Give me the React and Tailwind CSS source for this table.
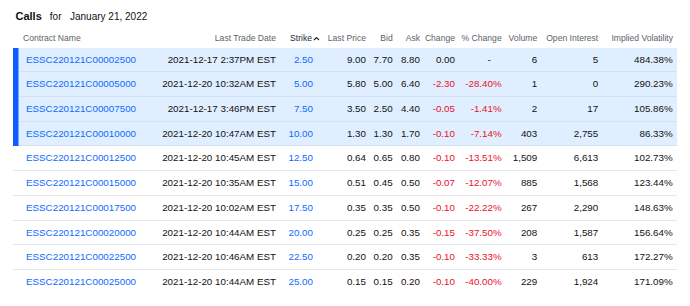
import React from "react";

const rows = [
  ["ESSC220121C00002500", "2021-12-17 2:37PM EST", "2.50", "9.00", "7.70", "8.80", "0.00", "-", "6", "5", "484.38%", true],
  ["ESSC220121C00005000", "2021-12-20 10:32AM EST", "5.00", "5.80", "5.00", "6.40", "-2.30", "-28.40%", "1", "0", "290.23%", true],
  ["ESSC220121C00007500", "2021-12-17 3:46PM EST", "7.50", "3.50", "2.50", "4.40", "-0.05", "-1.41%", "2", "17", "105.86%", true],
  ["ESSC220121C00010000", "2021-12-20 10:47AM EST", "10.00", "1.30", "1.30", "1.70", "-0.10", "-7.14%", "403", "2,755", "86.33%", true],
  ["ESSC220121C00012500", "2021-12-20 10:45AM EST", "12.50", "0.64", "0.65", "0.80", "-0.10", "-13.51%", "1,509", "6,613", "102.73%", false],
  ["ESSC220121C00015000", "2021-12-20 10:35AM EST", "15.00", "0.51", "0.45", "0.50", "-0.07", "-12.07%", "885", "1,568", "123.44%", false],
  ["ESSC220121C00017500", "2021-12-20 10:02AM EST", "17.50", "0.35", "0.35", "0.50", "-0.10", "-22.22%", "267", "2,290", "148.63%", false],
  ["ESSC220121C00020000", "2021-12-20 10:44AM EST", "20.00", "0.25", "0.25", "0.35", "-0.15", "-37.50%", "208", "1,587", "156.64%", false],
  ["ESSC220121C00022500", "2021-12-20 10:46AM EST", "22.50", "0.20", "0.20", "0.35", "-0.10", "-33.33%", "3", "613", "172.27%", false],
  ["ESSC220121C00025000", "2021-12-20 10:44AM EST", "25.00", "0.15", "0.15", "0.20", "-0.10", "-40.00%", "229", "1,924", "171.09%", false],
];

const headers = [
  "Last Price",
  "Bid",
  "Ask",
  "Change",
  "% Change",
  "Volume",
  "Open Interest",
  "Implied Volatility",
];

function App() {
  return (
    <div
      className="w-[690px] h-[306px] bg-white text-[#111] overflow-hidden"
      style={{ fontFamily: '"Liberation Sans", Arial, sans-serif' }}
    >
      <div className="h-[30px] pt-[2px] pl-[15.5px] flex items-center">
        <span className="text-[11px] font-bold">Calls</span>
        <span className="text-[10px] ml-[8px]">for</span>
        <span className="text-[10px] ml-[8.5px]">January 21, 2022</span>
      </div>

      <table className="ml-[13px] w-[664px] table-fixed border-separate border-spacing-0">
        <colgroup>
          <col className="w-[137px]" />
          <col className="w-[130px]" />
          <col className="w-[37px]" />
          <col className="w-[53px]" />
          <col className="w-[26.7px]" />
          <col className="w-[27.3px]" />
          <col className="w-[35px]" />
          <col className="w-[46.7px]" />
          <col className="w-[35.6px]" />
          <col className="w-[61px]" />
          <col className="w-[74.7px]" />
        </colgroup>
        <thead>
          <tr className="h-[17.7px] text-[8.6px] text-[#5b636a] font-normal">
            <th className="pl-[10px] text-left font-normal whitespace-nowrap">Contract Name</th>
            <th className="pr-[4px] text-right font-normal whitespace-nowrap">Last Trade Date</th>
            <th className="pr-[4px] text-right font-normal whitespace-nowrap text-[#232a31]">
              <span className="inline-flex items-center mr-[-7px]">
                Strike
                <svg width="7" height="5" viewBox="0 0 7 5" className="ml-[1px]">
                  <path d="M1 4 L3.5 1.5 L6 4" fill="none" stroke="#232a31" strokeWidth="1.2" />
                </svg>
              </span>
            </th>
            {headers.map((h) => (
              <th key={h} className="pr-[4px] text-right font-normal whitespace-nowrap">
                {h}
              </th>
            ))}
          </tr>
        </thead>
        <tbody className="text-[9.8px]">
          {rows.map((r, i) => {
            const hl = r[11];
            const last = i === rows.length - 1;
            const bg = hl ? "bg-[#e0efff]" : "bg-white";
            const sep = last
              ? ""
              : hl
              ? "shadow-[inset_0_-1px_0_#d3e1f1]"
              : "shadow-[inset_0_-1px_0_#e3e6ea]";
            const first = hl
              ? last
                ? "shadow-[inset_5.5px_0_0_#0f5cff]"
                : "shadow-[inset_5.5px_0_0_#0f5cff,inset_0_-1px_0_#d3e1f1]"
              : sep;
            const red = r[6].startsWith("-");
            return (
              <tr key={r[0]} className="h-[24.7px]">
                <td className={`${bg} ${first} pl-[13px] text-[#0f69ff] whitespace-nowrap`}>{r[0]}</td>
                <td className={`${bg} ${sep} pr-[4px] text-right whitespace-nowrap`}>{r[1]}</td>
                <td className={`${bg} ${sep} pr-[4px] text-right text-[#0f69ff]`}>{r[2]}</td>
                <td className={`${bg} ${sep} pr-[4px] text-right`}>{r[3]}</td>
                <td className={`${bg} ${sep} pr-[4px] text-right`}>{r[4]}</td>
                <td className={`${bg} ${sep} pr-[4px] text-right`}>{r[5]}</td>
                <td className={`${bg} ${sep} pr-[4px] text-right ${red ? "text-[#eb0f29]" : ""}`}>{r[6]}</td>
                <td
                  className={`${bg} ${sep} text-right whitespace-nowrap ${
                    r[7] === "-" ? "pr-[15px]" : "pr-[4px] text-[#eb0f29]"
                  }`}
                >
                  {r[7]}
                </td>
                <td className={`${bg} ${sep} pr-[4px] text-right`}>{r[8]}</td>
                <td className={`${bg} ${sep} pr-[4px] text-right`}>{r[9]}</td>
                <td className={`${bg} ${sep} pr-[4.3px] text-right`}>{r[10]}</td>
              </tr>
            );
          })}
        </tbody>
      </table>
    </div>
  );
}

export default App;
